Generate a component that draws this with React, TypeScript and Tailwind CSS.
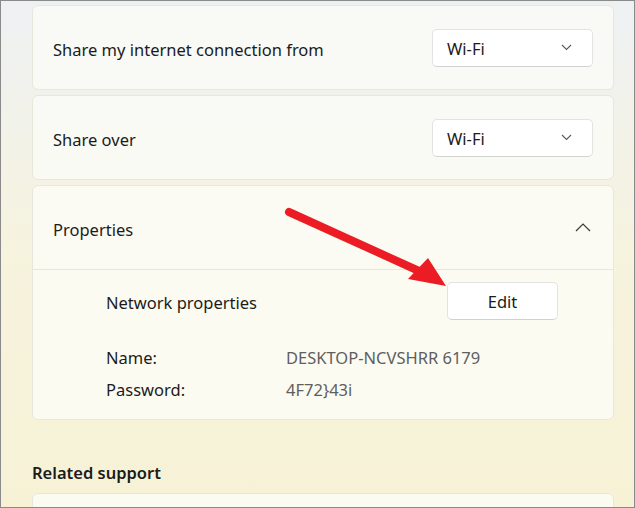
import React from "react";

const font = { fontFamily: '"Noto Sans", "Open Sans", sans-serif' };

function ChevronDown() {
  return (
    <svg width="11" height="7" viewBox="0 0 11 7" fill="none">
      <path d="M1 1l4.5 4.5L10 1" stroke="#5a5a5a" strokeWidth="1.1" />
    </svg>
  );
}

function ChevronUp() {
  return (
    <svg width="16" height="9" viewBox="0 0 16 9" fill="none">
      <path d="M1 8l7-7 7 7" stroke="#3a3a3a" strokeWidth="1.2" />
    </svg>
  );
}

function Dropdown({ value }: { value: string }) {
  return (
    <div className="flex h-[38px] w-[161px] items-center justify-between rounded-[5px] border border-[#e3e3e3] border-b-[#d2d2d2] bg-white pl-[14px] pr-[20px]">
      <span className="pt-[4px] text-[16.5px] text-[#1b1b1b]">{value}</span>
      <ChevronDown />
    </div>
  );
}

function Row({ label, value }: { label: string; value: string }) {
  return (
    <div className="flex h-[85px] items-center justify-between rounded-[6px] border border-[#e8e7dc] bg-[#fbfbf8]/80 pl-[20px] pr-[20px]">
      <span className="pt-[5px] text-[16.5px] text-[#1b1b1b]">{label}</span>
      <Dropdown value={value} />
    </div>
  );
}

export default function App() {
  return (
    <div
      className="relative h-[508px] w-[635px] overflow-hidden border border-[#8a8a8a] bg-gradient-to-b from-[#eef1f3] via-[#f6f3de] to-[#f7f2d6]"
      style={font}
    >
      <div className="flex flex-col pl-[31px] pr-[20px] pt-[4px]">
        <div className="flex flex-col gap-[5px]">
          <Row label="Share my internet connection from" value="Wi-Fi" />
          <Row label="Share over" value="Wi-Fi" />
          <div className="flex flex-col rounded-[6px] border border-[#e8e7dc] bg-[#fcfcf7]/80">
            <div className="flex h-[84px] items-center justify-between border-b border-[#e8e7d8] pl-[20px] pr-[22px]">
              <span className="pt-[5px] text-[16.5px] text-[#1b1b1b]">Properties</span>
              <ChevronUp />
            </div>
            <div className="flex flex-col pb-[17px] pl-[73px] pr-[55px] pt-[12px]">
              <div className="flex items-center justify-between">
                <span className="pt-[5px] text-[16.5px] text-[#1b1b1b]">Network properties</span>
                <div className="flex h-[38px] w-[111px] items-center justify-center rounded-[5px] border border-[#e3e3e3] border-b-[#d0d0d0] bg-white pt-[3px] text-[16.5px] text-[#1b1b1b]">
                  Edit
                </div>
              </div>
              <div className="mt-[26px] grid grid-cols-[180px_1fr] gap-y-[8px] text-[16.5px] leading-[24px]">
                <span className="text-[#1b1b1b]">Name:</span>
                <span className="text-[#5f5f5f]">DESKTOP-NCVSHRR 6179</span>
                <span className="text-[#1b1b1b]">Password:</span>
                <span className="text-[#5f5f5f]">{"4F72}43i"}</span>
              </div>
            </div>
          </div>
        </div>
        <div className="mt-[41px] text-[16.5px] font-semibold text-[#1b1b1b]">Related support</div>
        <div className="mt-[7px] h-[40px] rounded-[6px] border border-[#e8e7dc] bg-[#fcfcf7]/80" />
      </div>
      <svg className="pointer-events-none absolute left-0 top-0" width="635" height="508">
        <line x1="288" y1="211" x2="418" y2="270" stroke="#ec1c24" strokeWidth="8" strokeLinecap="round" />
        <polygon points="445,285 407,278 427,257" fill="#ec1c24" />
      </svg>
    </div>
  );
}
